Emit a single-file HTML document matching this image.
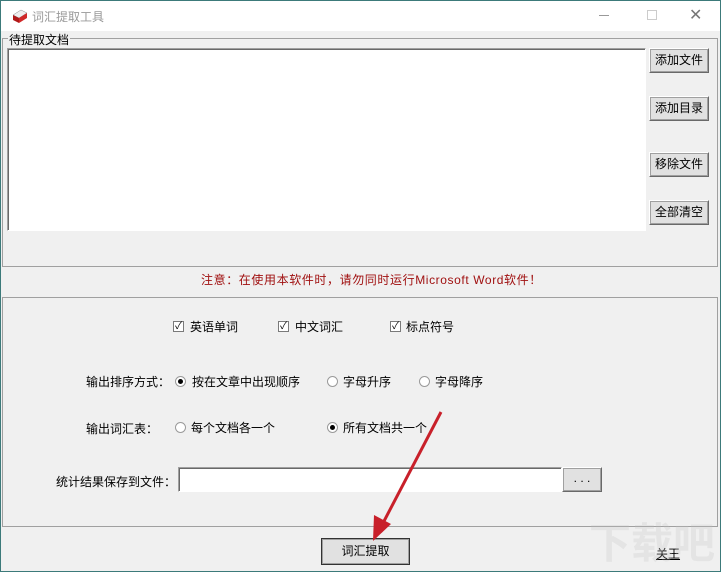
<!DOCTYPE html>
<html style="overflow:hidden;width:721px;height:572px"><head><meta charset="utf-8"><style>
*{margin:0;padding:0;box-sizing:border-box}
body{width:721px;height:572px;background:#f0f0f0;font:12px "Liberation Sans","Noto Sans CJK SC",sans-serif;color:#000;position:relative;overflow:hidden;border:1px solid #3c7a7a}
.a{position:absolute;white-space:nowrap}
.btn{position:absolute;background:#e1e1e1;border:1px solid;border-color:#fff #696969 #696969 #fff;box-shadow:1px 1px 0 #a0a0a0 inset,-1px -1px 0 #a0a0a0 inset;text-align:center;line-height:22px;font-size:12px}
.cb{position:absolute;width:11px;height:11px;background:#fff;border:1px solid #7a7a7a;font-size:10px;line-height:9px;text-align:center}
.rd{position:absolute;width:11px;height:11px;border-radius:50%;background:#fff;border:1px solid #9a9a9a}
.rd.on::after{content:"";position:absolute;left:2px;top:2px;width:5px;height:5px;border-radius:50%;background:#000}
</style></head><body>
<div class="a" style="left:0;top:0;width:719px;height:30px;background:#fff"></div>
<svg class="a" style="left:10px;top:6px" width="18" height="18" viewBox="0 0 18 18"><path d="M2 8 L10 3 L16 6 L8 11Z" fill="#eee" stroke="#888" stroke-width=".5"/><path d="M2 8 L8 11 L8 16 L2 13Z" fill="#b01818"/><path d="M8 11 L16 6 L16 11 L8 16Z" fill="#d02828"/></svg>
<div class="a" style="left:31px;top:7px;color:#999;font-size:12px">词汇提取工具</div>
<div class="a" style="left:598px;top:14px;width:10px;height:1px;background:#999"></div>
<div class="a" style="left:646px;top:9px;width:10px;height:10px;border:1px solid #ccc"></div>
<div class="a" style="left:688px;top:4px;color:#777;font-size:16px">✕</div>
<div class="a" style="left:1px;top:37px;width:716px;height:229px;border:1px solid #a0a0a0"></div>
<div class="a" style="left:7px;top:30px;background:#f0f0f0;padding:0 1px">待提取文档</div>
<div class="a" style="left:6px;top:47px;width:639px;height:183px;background:#fff;border:1px solid;border-color:#a0a0a0 #fff #fff #a0a0a0;box-shadow:1px 1px 0 #696969 inset"></div>
<div class="btn" style="left:648px;top:47px;width:60px;height:25px">添加文件</div>
<div class="btn" style="left:648px;top:95px;width:60px;height:25px">添加目录</div>
<div class="btn" style="left:648px;top:151px;width:60px;height:25px">移除文件</div>
<div class="btn" style="left:648px;top:199px;width:60px;height:25px">全部清空</div>
<div class="a" style="left:200px;top:270px;color:#a01010;font-size:12px;letter-spacing:0.6px">注意：在使用本软件时，请勿同时运行Microsoft Word软件！</div>
<div class="a" style="left:1px;top:296px;width:716px;height:230px;border:1px solid #a0a0a0"></div>
<div class="cb" style="left:172px;top:320px">✓</div><div class="a" style="left:189px;top:317px">英语单词</div>
<div class="cb" style="left:277px;top:320px">✓</div><div class="a" style="left:294px;top:317px">中文词汇</div>
<div class="cb" style="left:389px;top:320px">✓</div><div class="a" style="left:405px;top:317px">标点符号</div>
<div class="a" style="left:85px;top:372px">输出排序方式：</div>
<div class="rd on" style="left:174px;top:375px"></div><div class="a" style="left:191px;top:372px">按在文章中出现顺序</div>
<div class="rd" style="left:326px;top:375px"></div><div class="a" style="left:342px;top:372px">字母升序</div>
<div class="rd" style="left:418px;top:375px"></div><div class="a" style="left:434px;top:372px">字母降序</div>
<div class="a" style="left:85px;top:419px">输出词汇表：</div>
<div class="rd" style="left:174px;top:421px"></div><div class="a" style="left:190px;top:418px">每个文档各一个</div>
<div class="rd on" style="left:326px;top:421px"></div><div class="a" style="left:342px;top:418px">所有文档共一个</div>
<div class="a" style="left:55px;top:472px">统计结果保存到文件：</div>
<div class="a" style="left:177px;top:466px;width:384px;height:25px;background:#fff;border:1px solid;border-color:#a0a0a0 #fff #fff #a0a0a0;box-shadow:1px 1px 0 #696969 inset"></div>
<div class="btn" style="left:561px;top:466px;width:40px;height:25px;line-height:20px">. . .</div>
<div class="btn" style="left:320px;top:537px;width:89px;height:27px;line-height:25px;border:1px solid #333">词汇提取</div>
<div class="a" style="left:655px;top:544px;text-decoration:underline">关王</div>
<div class="a" style="left:588px;top:518px;font-size:42px;line-height:50px;color:rgba(190,190,190,.25);font-weight:bold">下载吧</div>
<svg class="a" style="left:0;top:0" width="721" height="572"><line x1="440" y1="411" x2="381" y2="524" stroke="#c8202a" stroke-width="3"/><path d="M372 540 L373 514 L390 523Z" fill="#c8202a"/></svg>
</body></html>
